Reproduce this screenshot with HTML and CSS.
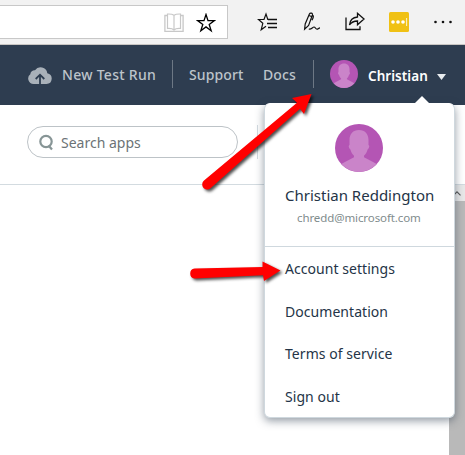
FILE: index.html
```html
<!DOCTYPE html>
<html lang="en">
<head>
<meta charset="utf-8">
<title>Test Cloud</title>
<link rel="stylesheet" href="styles.css">
</head>
<body>
<svg class="defs" width="0" height="0" aria-hidden="true">
  <symbol id="avatar" viewBox="0 0 48 48">
    <circle cx="24" cy="24" r="24" fill="#b455b4"/>
    <path d="M24 6c-6 0-9.500 4-9.500 10v5c-1.400.3-.8 3.500.9 4.400.8 3 2 4.700 3.600 6.300v1.500L6.200 40a24 24 0 0 0 35.600 0L29 33.200v-1.500c1.600-1.600 2.800-3.300 3.600-6.300 1.700-.9 2.300-4.100.9-4.400v-5C33.500 10 30 6 24 6z" fill="#ca84c9"/>
  </symbol>
</svg>
<div class="toolbar">
  <div class="address">
    <svg width="20" height="20" viewBox="0 0 20 20" fill="none" stroke="#c8c8c8">
      <path d="M3.500 2.500H.9v15.800h18.200V2.500h-2.600" stroke-width="1.300"/>
      <path d="M10 2.200C8 .8 5.500 1 3.500 1v14.500c2.500-.2 4.800-.2 6.500 1.500 1.700-1.700 4-1.700 6.500-1.500V1C14.500 1 12 .8 10 2.200zM10 2v15" stroke-width="1.200"/>
    </svg>
    <svg class="star" width="20" height="20" viewBox="0 0 20 20" fill="none" stroke="#000" stroke-width="1.300">
      <path d="M10 1.500l2 6.100h6.400l-5.200 3.800 2 6.300L10 13.900l-5.200 3.800 2-6.300-5.200-3.800H8z"/>
    </svg>
  </div>
  <svg class="tool hub" width="20" height="20" viewBox="0 0 20 20" fill="none" stroke="#111" stroke-width="1.200">
    <path d="M12 7.500H10.800L9 2 7 7.500H1.500l4.300 3.800-1.600 6.500L9 14.200"/>
    <path d="M11 7.500h9M10 11.500h10M11 15.500h9" stroke-width="1.300"/>
  </svg>
  <svg class="tool pen" width="20" height="20" viewBox="0 0 20 20" fill="none" stroke="#111" stroke-width="1.200">
    <path d="M2.600 17.300L3.200 12 7.400 2c.8-1.700 3.600-.9 3 1L6.600 13.500l-4 3.800zM7 3.500l3 1.200M10.400 3c1.600.8 1 2.500-.4 5.300"/>
    <path d="M6.800 17c2.500.8 3.700-2 5.200-2 1.500 0 1.300 2.200 3 2.200 1.300 0 1.700-1.400 3-1.400"/>
  </svg>
  <svg class="tool share" width="20" height="20" viewBox="0 0 20 20" fill="none" stroke="#111" stroke-width="1.300">
    <path d="M1 5.500v12H15v-3.200"/>
    <path d="M4.500 13C5 8 8 5.300 12.500 5V1.300L19 7l-6.500 5.700V9C9 9 6.500 10 4.500 13z"/>
  </svg>
  <svg class="tool pass" width="20" height="20" viewBox="0 0 20 20">
    <rect width="20" height="20" rx="1.500" fill="#f0c114"/>
    <g fill="#fff"><circle cx="4" cy="10" r="1.800"/><circle cx="9" cy="10" r="1.800"/><circle cx="14" cy="10" r="1.800"/><path d="M17.300 6h.8v8h-.8z"/></g>
  </svg>
  <svg class="tool more" width="20" height="20" viewBox="0 0 20 20" fill="#111"><circle cx="2.500" cy="10" r="1.300"/><circle cx="10" cy="10" r="1.300"/><circle cx="17.500" cy="10" r="1.300"/></svg>
</div>

<header class="nav">
  <svg class="cloud" width="24" height="17" viewBox="0 0 24 17">
    <path d="M5.500 17A5.500 5.500 0 0 1 2.300 7.200 4.200 4.200 0 0 1 7 3.300 6.800 6.800 0 0 1 19.300 6.300 5.400 5.400 0 0 1 18.500 17z" fill="#a9b1b9"/>
    <path d="M12 17V8.500M7.700 12L12 7.700l4.300 4.300" fill="none" stroke="#2e3d50" stroke-width="1.800"/>
  </svg>
  <a class="link run">New Test Run</a>
  <i class="rule"></i>
  <a class="link support">Support</a>
  <a class="link docs">Docs</a>
  <i class="rule second"></i>
  <svg class="face" width="28" height="28"><use href="#avatar"/></svg>
  <span class="user">Christian</span>
  <svg class="down" width="9" height="6" viewBox="0 0 9 6"><path d="M0 0h9L4.500 6z" fill="#e8ecef"/></svg>
</header>

<div class="filters">
  <label class="search">
    <svg width="16" height="17" viewBox="0 0 16 17" fill="none" stroke="#879596"><circle cx="7" cy="7.500" r="5.700" stroke-width="2.200"/><path d="M9.500 11.500l3.500 4" stroke-width="2.200"/></svg>
    <span>Search apps</span>
  </label>
  <i class="split"></i>
</div>

<main class="content">
  <div class="scrollbar">
    <div class="up"><svg width="8" height="5" viewBox="0 0 8 5" fill="none" stroke="#555" stroke-width="1.100"><path d="M.5 4.300L4 .8l3.500 3.500"/></svg></div>
    <div class="thumb"></div>
  </div>
</main>

<section class="menu">
  <div class="profile">
    <svg width="48" height="48"><use href="#avatar"/></svg>
    <div class="name">Christian Reddington</div>
    <div class="mail">chredd@microsoft.com</div>
  </div>
  <nav class="items">
    <a class="i1">Account settings</a>
    <a class="i2">Documentation</a>
    <a class="i3">Terms of service</a>
    <a class="i4">Sign out</a>
  </nav>
</section>

<svg class="arrows" width="465" height="455" viewBox="0 0 465 455">
  <path d="M204 180.500L297 102.800 292 98l19.500-4-7.500 20-4-5.300L210.500 188.300A5 5 0 0 1 204 180.500z" fill="#f00"/>
  <path d="M194.500 268.600L262.500 267v-5.500L280.500 270.500 264 281l-1-5.700-68.500 3.200a5 5 0 0 1 0-9.900z" fill="#f00"/>
</svg>
</body>
</html>
```
FILE: styles.css
```css
* { box-sizing: border-box; }
body {
  margin: 0;
  width: 465px;
  height: 455px;
  overflow: hidden;
  background: #fff;
  font-family: "Noto Sans", "Open Sans", sans-serif;
  font-size: 14px;
  color: #243447;
}
svg { display: block; flex: none; }
.defs { position: absolute; }
a, span, .name, .mail { white-space: nowrap; }

.toolbar {
  display: flex;
  align-items: flex-start;
  height: 45px;
  background: #f2f2f2;
  border-bottom: 1px solid #c9c6c3;
}
.address {
  display: flex;
  gap: 12px;
  width: 228px;
  height: 34px;
  margin-top: 5px;
  padding: 7px 0 0 164px;
  background: #fff;
  border: 1px solid #c8c8c8;
  border-left: 0;
}
.tool { margin-top: 12px; }
.hub { margin-left: 29px; }
.pen { margin-left: 25px; }
.share { margin-left: 23px; }
.pass { margin-left: 24px; }
.more { margin-left: 24px; }

.nav {
  display: flex;
  height: 60px;
  padding-left: 28px;
  background: #2e3d50;
  color: #bdc4ca;
  line-height: 20px;
}
.cloud { margin-top: 22px; }
.link { margin-top: 20px; font-weight: 500; letter-spacing: .1px; }
.run { width: 94px; margin-left: 10px; letter-spacing: .28px; }
.rule { width: 1px; height: 28px; margin-top: 15px; margin-left: 16px; background: #6d7885; }
.support { width: 55px; margin-left: 16px; }
.docs { width: 34px; margin-left: 19px; }
.face { margin: 15px 0 0 16px; }
.user { width: 61px; margin: 21px 0 0 10px; font-weight: 600; font-size: 13.500px; letter-spacing: .05px; color: #fff; }
.down { margin: 29px 0 0 8px; }

.filters {
  display: flex;
  height: 80px;
  padding: 21px 0 0 27px;
  border-bottom: 1px solid #d3dbe0;
}
.search {
  display: flex;
  align-items: center;
  width: 211px;
  height: 32px;
  padding-left: 11px;
  border: 1px solid #bdc3c7;
  border-radius: 16px;
  color: #6c7376;
}
.search span { margin-left: 6px; }
.split { width: 1px; height: 34px; margin: -1px 0 0 19px; background: #d3dbe0; }

.content { display: flex; justify-content: flex-end; height: 270px; }
.scrollbar { width: 16px; background: #b9b9b9; }
.up { display: flex; justify-content: center; padding-top: 6px; height: 16px; background: #e8e8e8; }

.menu {
  position: absolute;
  left: 264px;
  top: 103px;
  width: 191px;
  height: 315px;
  background: #fff;
  border: 1px solid #cfd8de;
  border-top-color: #fff;
  border-radius: 6px;
  box-shadow: 0 3px 9px rgba(46, 61, 80, .5);
}
.menu::before {
  content: "";
  position: absolute;
  left: 150px;
  top: -8px;
  border: solid transparent;
  border-width: 0 7px 7px;
  border-bottom-color: #fff;
}
.profile {
  height: 143px;
  padding: 20px 0 0 20px;
  border-bottom: 1px solid #cfd8de;
}
.profile svg { margin-left: 50px; }
.name { margin-top: 12px; font-size: 15px; line-height: 22px; }
.mail { margin: 4px 0 0 12px; font-size: 11.500px; letter-spacing: -.1px; line-height: 16px; color: #7f8c8d; }
.items { display: flex; flex-direction: column; padding: 1px 0 0 20px; }
.items a { height: 42.700px; line-height: 42.700px; letter-spacing: .05px; }

.arrows {
  position: absolute;
  left: 0;
  top: 0;
  filter: drop-shadow(2px 2px 1.500px rgba(0, 0, 0, .7));
}
```
